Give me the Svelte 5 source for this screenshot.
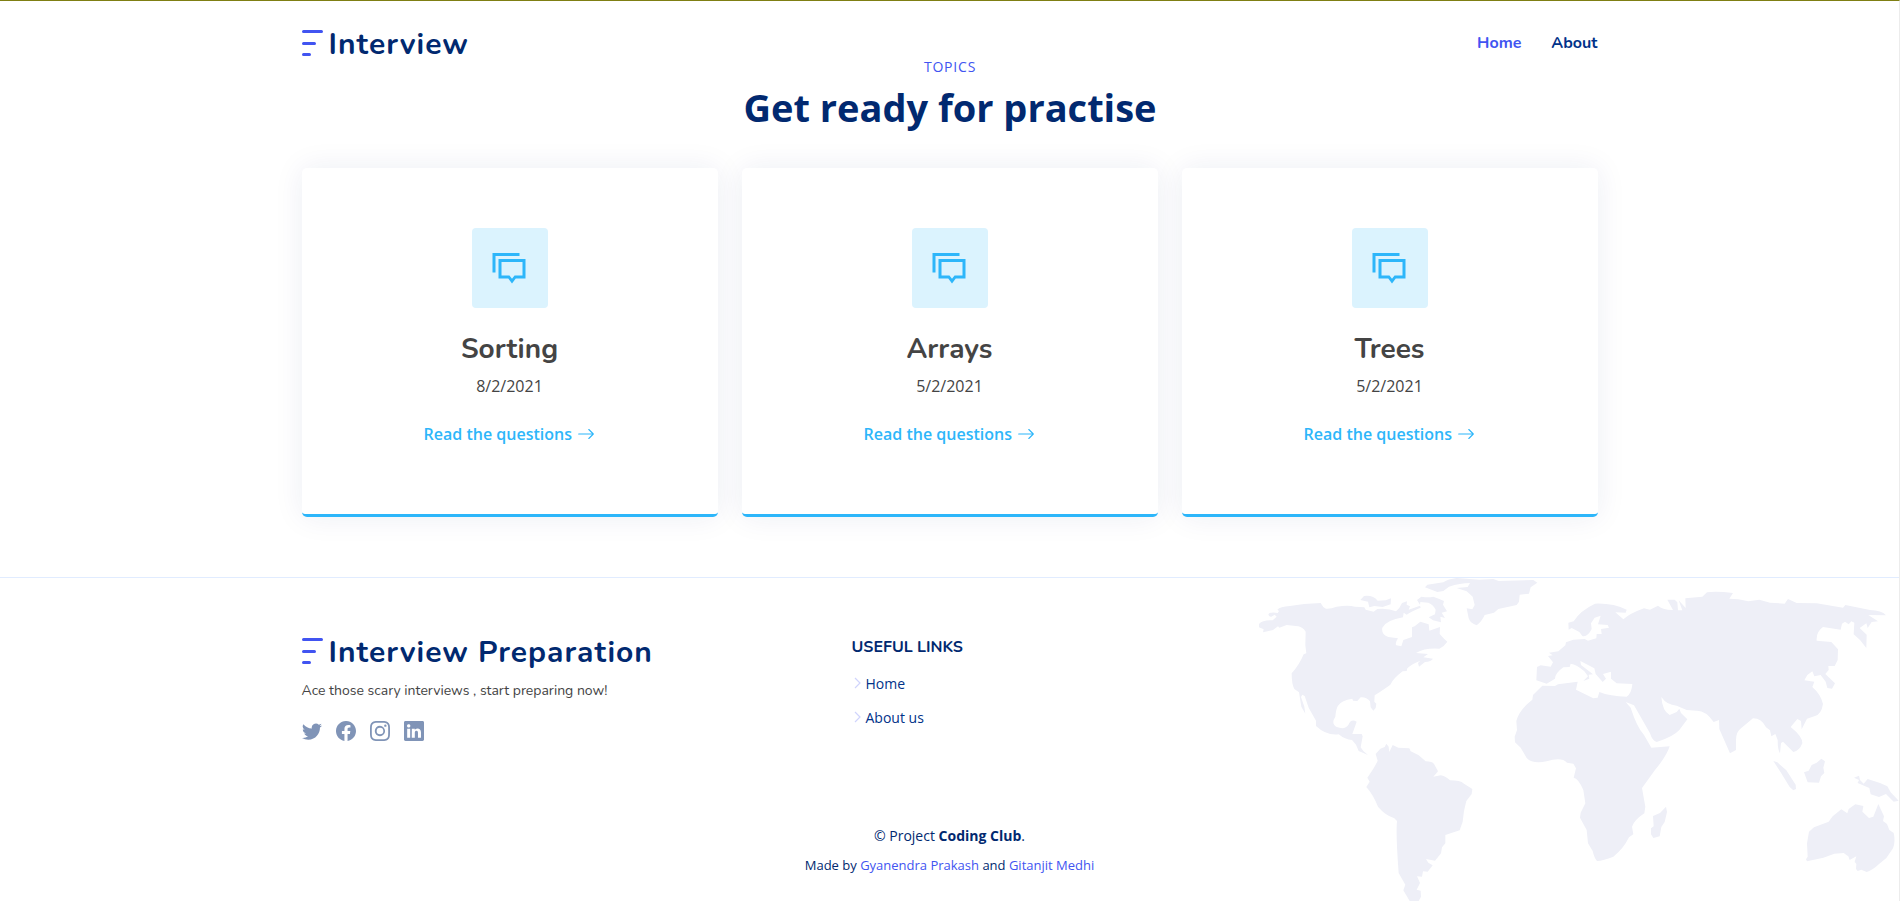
<script>
  const topics = [
    { name: 'Sorting', date: '8/2/2021' },
    { name: 'Arrays', date: '5/2/2021' },
    { name: 'Trees', date: '5/2/2021' }
  ];
  const links = ['Home', 'About us'];
  const social = [
    'M5.026 15c6.038 0 9.341-5.003 9.341-9.334 0-.14 0-.282-.006-.422A6.685 6.685 0 0 0 16 3.542a6.658 6.658 0 0 1-1.889.518 3.301 3.301 0 0 0 1.447-1.817 6.533 6.533 0 0 1-2.087.793A3.286 3.286 0 0 0 7.875 6.03a9.325 9.325 0 0 1-6.767-3.429 3.289 3.289 0 0 0 1.018 4.382A3.323 3.323 0 0 1 .64 6.575v.045a3.288 3.288 0 0 0 2.632 3.218 3.203 3.203 0 0 1-.865.115 3.23 3.23 0 0 1-.614-.057 3.283 3.283 0 0 0 3.067 2.277A6.588 6.588 0 0 1 .78 13.58a6.32 6.32 0 0 1-.78-.045A9.344 9.344 0 0 0 5.026 15z',
    'M16 8.049c0-4.446-3.582-8.05-8-8.05C3.58 0-.002 3.603-.002 8.05c0 4.017 2.926 7.347 6.75 7.951v-5.625h-2.03V8.05H6.75V6.275c0-2.017 1.195-3.131 3.022-3.131.876 0 1.791.157 1.791.157v1.98h-1.009c-.993 0-1.303.621-1.303 1.258v1.51h2.218l-.354 2.326H9.25V16c3.824-.604 6.75-3.934 6.75-7.951z',
    'M8 0C5.829 0 5.556.01 4.703.048 3.85.088 3.269.222 2.76.42a3.917 3.917 0 0 0-1.417.923A3.927 3.927 0 0 0 .42 2.76C.222 3.268.087 3.85.048 4.7.01 5.555 0 5.827 0 8.001c0 2.172.01 2.444.048 3.297.04.852.174 1.433.372 1.942.205.526.478.972.923 1.417.444.445.89.719 1.416.923.51.198 1.09.333 1.942.372C5.555 15.99 5.827 16 8 16s2.444-.01 3.298-.048c.851-.04 1.434-.174 1.943-.372a3.916 3.916 0 0 0 1.416-.923c.445-.445.718-.891.923-1.417.197-.509.332-1.09.372-1.942C15.99 10.445 16 10.173 16 8s-.01-2.445-.048-3.299c-.04-.851-.175-1.433-.372-1.941a3.926 3.926 0 0 0-.923-1.417A3.911 3.911 0 0 0 13.24.42c-.51-.198-1.092-.333-1.943-.372C10.443.01 10.172 0 7.998 0h.003zm-.717 1.442h.718c2.136 0 2.389.007 3.232.046.78.035 1.204.166 1.486.275.373.145.64.319.92.599.28.28.453.546.598.92.11.281.24.705.275 1.485.039.843.047 1.096.047 3.231s-.008 2.389-.047 3.232c-.035.78-.166 1.203-.275 1.485a2.47 2.47 0 0 1-.599.919c-.28.28-.546.453-.92.598-.28.11-.704.24-1.485.276-.843.038-1.096.047-3.232.047s-2.39-.009-3.233-.047c-.78-.036-1.203-.166-1.485-.276a2.478 2.478 0 0 1-.92-.598 2.48 2.48 0 0 1-.6-.92c-.109-.281-.24-.705-.275-1.485-.038-.843-.046-1.096-.046-3.233 0-2.136.008-2.388.046-3.231.036-.78.166-1.204.276-1.486.145-.373.319-.64.599-.92.28-.28.546-.453.92-.598.282-.11.705-.24 1.485-.276.738-.034 1.024-.044 2.515-.045v.002zm4.988 1.328a.96.96 0 1 0 0 1.92.96.96 0 0 0 0-1.92zm-4.27 1.122a4.109 4.109 0 1 0 0 8.217 4.109 4.109 0 0 0 0-8.217zm0 1.441a2.667 2.667 0 1 1 0 5.334 2.667 2.667 0 0 1 0-5.334z',
    'M0 1.146C0 .513.526 0 1.175 0h13.65C15.474 0 16 .513 16 1.146v13.708c0 .633-.526 1.146-1.175 1.146H1.175C.526 16 0 15.487 0 14.854V1.146zm4.943 12.248V6.169H2.542v7.225h2.401zm-1.2-8.212c.837 0 1.358-.554 1.358-1.248-.015-.709-.52-1.248-1.342-1.248-.822 0-1.359.54-1.359 1.248 0 .694.521 1.248 1.327 1.248h.016zm4.908 8.212V9.359c0-.216.016-.432.08-.586.173-.431.568-.878 1.232-.878.869 0 1.216.662 1.216 1.634v3.865h2.401V9.25c0-2.22-1.184-3.252-2.764-3.252-1.274 0-1.845.7-2.165 1.193v.025h-.016a5.54 5.54 0 0 1 .016-.025V6.169h-2.4c.03.678 0 7.225 0 7.225h2.4z'
  ];
  // Continent outlines, three units to the pixel.
  const west = [
    'M57 192Q68 179 98 181L110 170L104 164L94 170Q86 171 85 163Q90 155 113 159L117 153L112 149Q120 140 150 138Q190 131 242 129Q248 142 258 146Q272 147 290 140Q325 134 345 140L373 142L377 149L401 155L412 147Q445 144 468 154Q480 144 486 129L501 124L500 134L510 139L506 149L540 137L542 143Q515 153 500 164L491 158L489 172Q440 180 427 203Q423 224 445 231L474 235Q464 250 469 256L484 259L490 240L516 231L516 202L524 199L541 185L566 193L568 212L600 201L599 222L613 237L622 245Q612 260 598 266Q555 263 528 279L564 282L550 292L579 296Q574 304 555 306L537 320L534 309L541 302Q515 312 502 325L500 333L488 334Q460 355 451 374Q435 386 404 406L403 425L409 431L407 444L400 452L392 442L390 424Q378 410 362 412L352 423L339 422L337 416Q305 420 294 437Q288 446 286 470Q272 491 290 501Q315 510 325 495Q333 475 350 485L337 522L365 522L368 529L362 562L370 573L384 585L356 573L348 554L336 540Q315 539 296 523Q260 528 228 498L228 482L206 443L194 408L187 404L183 411L193 440L196 461L184 440L177 397L163 387Q155 374 155 340Q178 315 191 283L199 280L196 256L197 215Q188 202 175 199L140 195L118 203L114 199L99 210L69 217L71 208L57 202Z',
    'M361 120L372 108Q400 105 413 122L437 121L453 115L452 133L428 141L403 138L388 142L384 125Z',
    'M531 120L544 110Q565 113 580 110Q600 117 612 123L609 134L621 154L605 158L615 174L601 170L603 187L579 181L566 172L585 163L587 149Q580 134 565 128L541 126L540 134Z',
    'M555 82L562 74L610 67Q625 57 650 54L718 59L760 57L776 63L880 60L892 68L872 82L867 101L839 104L837 125L830 135L775 147L762 158L734 165Q725 185 710 196Q691 190 686 175L680 145L697 148L704 135L698 110L680 94L650 84L683 81L690 69Q660 69 627 80L610 93L592 96Z',
    'M407 582L421 566L434 561L439 551L446 560L448 576L458 555L475 563L508 565L512 574L535 585L557 604Q582 604 585 617L594 634L580 650L602 646Q615 648 630 661Q660 661 672 671L697 687L695 702L679 723Q671 750 668 785L659 811L616 825L616 850L606 862L603 880L585 902L558 897L565 908L578 916L563 935L549 934L546 950L531 949L540 969L530 989L542 992L543 1010L536 1023L509 1023L490 991L496 974L476 939Q467 820 471 783L463 775Q435 765 414 740Q399 703 379 681L389 665L382 653Q403 624 413 602Z'
  ];
  const east = [
    'M205 188L221 184Q240 152 285 131Q340 129 380 149L377 158L346 157L370 178Q390 160 432 145L450 149L474 137Q492 151 519 150L502 119L524 119L532 127L534 151L547 151L536 121L557 144L556 115L607 110L621 97Q650 93 699 99L688 116L715 118L745 124L778 119L810 128L854 131L864 117L890 129L950 130L1029 143L1036 135L1110 150Q1145 151 1158 166L1105 165L1134 184L1115 186L1103 204L1099 190L1079 204L1100 224L1099 264L1080 240L1061 223L1063 188L1054 184L1046 193L1035 185L1026 191L1022 209L969 201Q948 215 950 242L994 246L1014 268L1013 300L1004 318L985 318L986 330L976 342L1005 370L996 386L982 384L977 365L962 345L943 349L937 334L922 345L913 361L943 365L937 381Q963 404 969 432Q964 463 945 468L921 476L905 508L903 483L892 477L872 501Q908 530 907 550Q898 573 880 576L849 545L843 549L840 580Q833 570 833 540L826 522L814 529L810 511L798 502Q785 475 759 475L724 504Q708 515 708 540L708 570L690 580Q680 557 658 507L657 480L641 486Q617 451 590 452L560 450L530 437Q500 435 484 411Q487 453 509 465L530 456L538 446L543 459L562 478L538 510Q520 530 470 546Q457 543 450 520L402 436L377 426L392 443Q410 500 432 525L454 563L509 559Q500 588 465 630L426 684L436 740L433 760Q403 780 396 800L400 823L387 832Q370 867 340 890Q310 902 291 903Q283 895 278 873L264 850L260 810L240 773L242 758L256 730L250 690Q235 655 221 653L228 625L220 611L201 608Q185 590 140 604Q98 613 80 594L62 563L45 547L44 530L51 510L49 483Q57 450 97 419L99 405L127 377L165 378L174 373L233 365L228 389L280 415L293 413L298 396Q330 409 380 410Q395 400 397 372L350 370L333 356L333 335L309 342L318 356L308 366L287 342L283 325L241 303L243 315L279 343L266 344L268 356L250 363L264 349L253 334Q230 313 212 311L209 321L190 322Q165 340 165 356L140 371L109 361L111 321L122 316L152 320L159 307L144 288L158 286L147 278L175 274L196 256L198 247L220 239L254 237L264 242L289 235L290 222L305 222L303 207L327 203L323 195L294 193L302 167L284 173L273 190L275 207Q263 232 247 228L238 216L215 204L206 209Z',
    'M459 768L480 759L498 740L501 756L494 786L484 801L479 829L460 834L453 823L453 805L461 799Z',
    'M820 603L832 607L859 631L887 674L888 687L880 691L869 681L842 637Z',
    'M912 637L926 632L935 615L950 608L964 596L975 604L970 623L973 639L963 649L957 668L923 667Z',
    'M1062 653L1077 647L1080 660L1091 671L1103 657L1140 669L1162 679L1172 697L1196 722L1181 725L1158 702L1137 711L1112 703L1108 684L1073 669L1077 660Z',
    'M927 815L942 802L986 785L998 769L1024 748L1042 760L1046 747L1066 733L1090 738L1087 755L1107 774L1120 770L1135 732L1152 769L1149 783L1161 792L1168 810L1181 819Q1187 845 1179 865L1159 894L1138 911Q1115 932 1100 936L1084 929L1073 933L1068 927L1069 912L1064 905L1069 889L1049 900L1045 889L1031 879L1003 881L970 893L921 904L918 898L923 890L921 850Z'
  ];
</script>

{#snippet bars()}
  <svg class="bars" width="21" height="26" viewBox="0 0 21 26" fill="none" stroke="#4154f1" stroke-width="3" stroke-linecap="round">
    <path d="M1.5 1.5h18M1.5 13.5h11M1.5 24.5h6" />
  </svg>
{/snippet}

<div class="page">
  <header class="container">
    <a class="logo" href="#top">{@render bars()}<span>Interview</span></a>
    <nav><a class="active" href="#home">Home</a><a href="#about">About</a></nav>
  </header>

  <main class="container">
    <h2>Topics</h2>
    <p class="heading">Get ready for practise</p>
    <div class="cards">
      {#each topics as topic}
        <article>
          <div class="icon">
            <svg width="36" height="36" viewBox="0 0 24 24" fill="#2db6fa">
              <path d="M1 2h18v2H3v11H1V2zm4 4h18v13h-6.500L14 22.300 11.500 19H5V6zm2 2v9h5.300L14 19.200 15.700 17H21V8H7z" />
            </svg>
          </div>
          <h3>{topic.name}</h3>
          <p>{topic.date}</p>
          <a href="#questions"><span>Read the questions</span>
            <svg width="18" height="18" viewBox="0 0 16 16" fill="#2db6fa"><path fill-rule="evenodd" d="M1 8a.5.5 0 0 1 .5-.5h11.793l-3.147-3.146a.5.5 0 0 1 .708-.708l4 4a.5.5 0 0 1 0 .708l-4 4a.5.5 0 0 1-.708-.708L13.293 8.500H1.500A.5.5 0 0 1 1 8z" /></svg>
          </a>
        </article>
      {/each}
    </div>
  </main>

  <footer>
    <svg class="map" width="660" height="341" viewBox="0 0 1980 1023" fill="#eeeff7" aria-hidden="true">
      {#each west as d}<path {d} />{/each}
      <g transform="translate(780 0)">{#each east as d}<path {d} />{/each}</g>
    </svg>
    <div class="container columns">
      <section class="about">
        <a class="logo" href="#top">{@render bars()}<span>Interview Preparation</span></a>
        <p>Ace those scary interviews , start preparing now!</p>
        <div class="social">
          {#each social as d}
            <svg width="20" height="20" viewBox="0 0 16 16" fill="#8094b7"><path {d} /></svg>
          {/each}
        </div>
      </section>
      <section class="links">
        <h4>Useful Links</h4>
        {#each links as link}
          <a href="#link"><svg width="12" height="12" viewBox="0 0 12 12" fill="none" stroke="#d0d4fc" stroke-width="1.200"><path d="M3 1l5 5-5 5" /></svg>{link}</a>
        {/each}
      </section>
    </div>
    <div class="copyright">© Project <strong>Coding Club</strong>.</div>
    <div class="credits">Made by <a href="#gp">Gyanendra Prakash</a> and <a href="#gm">Gitanjit Medhi</a></div>
  </footer>
</div>

<style>
  :global(body) { margin: 0; background: #fff; }
  * { box-sizing: border-box; }
  .page { height: 901px; overflow: hidden; border-top: 1px solid #7f7f13; border-right: 1px solid #ececec; font-family: 'Open Sans', sans-serif; color: #444; }
  a { text-decoration: none; }
  h2, h3, h4, p { margin: 0; }
  .container { width: 1296px; margin: 0 auto; }
  header { height: 57px; padding-top: 22px; display: flex; justify-content: space-between; }
  .logo { display: flex; align-items: flex-start; color: #012970; font: 700 30px/40px Nunito, Lato, sans-serif; letter-spacing: 1px; white-space: nowrap; }
  .logo span { padding-top: 2px; }
  .bars { margin: 7px 6px 0 0; flex: none; }
  nav { display: flex; gap: 30px; font: 700 16px/40px Nunito, Lato, sans-serif; }
  nav a { color: #013289; }
  nav a.active { color: #4154f1; }
  main { height: 519px; text-align: center; }
  h2 { padding-left: 1px; font-size: 14px; line-height: 18px; font-weight: 500; letter-spacing: .8px; color: #4154f1; text-transform: uppercase; }
  .heading { padding-left: 1px; font-size: 38px; line-height: 42px; font-weight: 700; color: #012970; margin-top: 10px; }
  .cards { display: grid; grid-template-columns: repeat(3, 416px); gap: 24px; margin-top: 40px; }
  article { height: 349px; padding-top: 60px; display: flex; flex-direction: column; align-items: center; border-bottom: 3px solid #2db6fa; border-radius: 5px; background: #fff; box-shadow: 0 0 30px rgba(1, 41, 112, .08); }
  .icon { width: 76px; height: 80px; display: grid; place-items: center; padding-right: 1px; border-radius: 4px; background: #dbf3fe; }
  h3 { margin-top: 22px; font: 700 28px/38px Nunito, Lato, sans-serif; color: #444; }
  article p { margin-top: 6px; font-size: 16px; line-height: 24px; }
  article a { display: flex; align-items: center; gap: 5.500px; margin-top: 24px; font-size: 16px; line-height: 24px; font-weight: 600; color: #2db6fa; }
  footer { position: relative; height: 324px; padding-top: 53px; border-top: 1px solid #e1ecff; color: #012970; }
  .map { position: absolute; right: -1px; bottom: 0; }
  .columns { position: relative; display: grid; grid-template-columns: 550px 1fr; height: 193px; }
  .about p { margin-top: 6px; font: 400 14px/24px Nunito, Lato, sans-serif; color: #444; }
  .social { display: flex; gap: 14px; margin-top: 18px; }
  h4 { font: 700 16px/24px Nunito, Lato, sans-serif; text-transform: uppercase; margin: 4px 0 7px; }
  .links a { display: flex; align-items: center; height: 34px; gap: 2px; font-size: 14px; color: #013289; }
  .copyright, .credits { position: relative; text-align: center; font-size: 14px; line-height: 24px; }
  .credits { margin-top: 5px; font-size: 13px; }
  .credits a { color: #4154f1; }
</style>
